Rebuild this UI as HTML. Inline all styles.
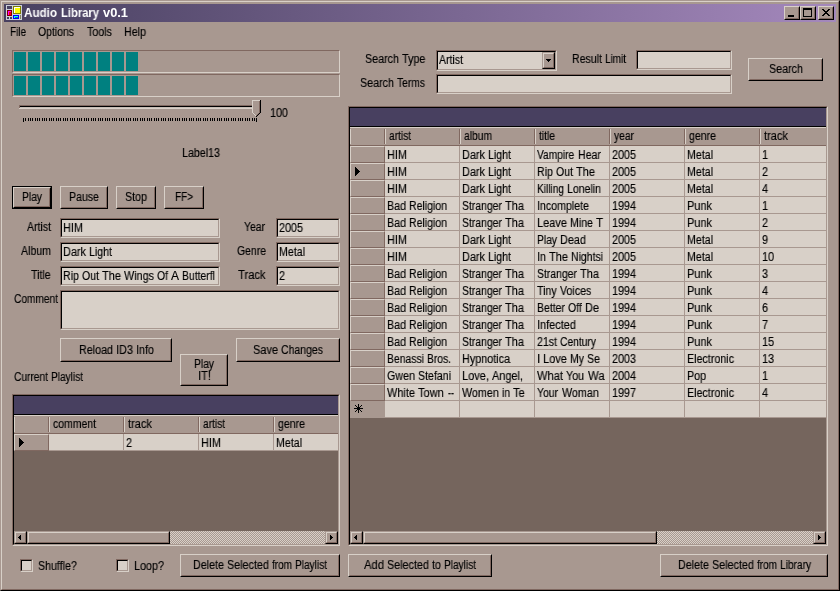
<!DOCTYPE html>
<html><head><meta charset="utf-8"><title>Audio Library v0.1</title>
<style>
html,body{margin:0;padding:0;}
body{width:840px;height:591px;overflow:hidden;background:#a89890;position:relative;font-family:"Liberation Sans",sans-serif;font-size:12px;color:#000;line-height:13px;}
.w{display:inline-block;white-space:nowrap;}
.s{display:inline-block;transform-origin:0 50%;will-change:transform;-webkit-text-stroke-width:0.15px;}
.tt .s{-webkit-text-stroke-width:0;}
div,span,i{box-sizing:border-box;}
body>div,.grid>div,.pb>i{position:absolute;}
.t{white-space:nowrap;}
.win{left:0;top:0;width:840px;height:591px;border:1px solid;border-color:#a89890 #000 #000 #a89890;}
.win2{left:1px;top:1px;width:838px;height:589px;border:1px solid;border-color:#d8d0c8 #806860 #806860 #d8d0c8;}
.title{left:4px;top:4px;width:832px;height:18px;background:linear-gradient(90deg,#484060 0%,#a488bc 100%);}
.tt{color:#fff;font-weight:bold;white-space:nowrap;}
.btn{background:#a89890;border:1px solid;border-color:#d8d0c8 #000 #000 #d8d0c8;}
.btn:before{content:"";position:absolute;left:0;top:0;right:0;bottom:0;border:1px solid;border-color:#a89890 #806860 #806860 #a89890;}
.btn.def{border-color:#000;}
.btn.def:before{border-color:#d8d0c8 #000 #000 #d8d0c8;}
.btn.def:after{content:"";position:absolute;left:1px;top:1px;right:1px;bottom:1px;border:1px solid;border-color:#a89890 #806860 #806860 #a89890;}
.bi{position:absolute;left:0;right:0;height:13px;text-align:center;white-space:nowrap;}
.bi.ml{height:26px;}
.bl{height:12px;line-height:12px;}
.tb{background:#d8d0c8;border:1px solid;border-color:#806860 #d8d0c8 #d8d0c8 #806860;}
.tb:before{content:"";position:absolute;left:0;top:0;right:0;bottom:0;border:1px solid;border-color:#000 #a89890 #a89890 #000;pointer-events:none;z-index:5;}
.tv{position:absolute;left:2px;top:3px;right:2px;white-space:nowrap;overflow:hidden;height:13px;}
.pb{border:1px solid;border-color:#806860 #d8d0c8 #d8d0c8 #806860;}
.pb>i{top:1px;width:12px;bottom:1px;background:#008080;display:block;}
.go{border:1px solid;border-color:#806860 #d8d0c8 #d8d0c8 #806860;}
.grid{position:absolute;left:0;top:0;right:0;bottom:0;border:1px solid;border-color:#000 #a89890 #a89890 #000;background:#75655d;overflow:hidden;}
.grid>div{overflow:hidden;}
.cap{background:#484060;}
.hc{background:#a89890;border-top:1px solid #d8d0c8;border-bottom:1px solid #806860;}
.hc:before{content:"";position:absolute;left:0;top:1px;bottom:1px;width:1px;background:#d8d0c8;}
.hc:after{content:"";position:absolute;right:0;top:1px;bottom:1px;width:1px;background:#806860;}
.hc>span{position:absolute;left:4px;top:2px;white-space:nowrap;}
.rh{background:#a89890;border:1px solid;border-color:#d8d0c8 #806860 #806860 #d8d0c8;}
.rh.flat{border:0;}
.cell{background:#d8d0c8;border-right:1px solid #a89890;border-bottom:1px solid #a89890;}
.cell>span{position:absolute;left:2px;top:3px;white-space:nowrap;}
.star{position:absolute;left:3px;top:1px;font-size:12px;font-family:"DejaVu Sans",sans-serif;}
.sbt{background-color:#a89890;background-image:linear-gradient(45deg,#d8d0c8 25%,transparent 25%,transparent 75%,#d8d0c8 75%),linear-gradient(45deg,#d8d0c8 25%,transparent 25%,transparent 75%,#d8d0c8 75%);background-size:2px 2px;background-position:0 0,1px 1px;}
.sbb{background:#a89890;border:1px solid;border-color:#a89890 #000 #000 #a89890;}
.sbb:before{content:"";position:absolute;left:0;top:0;right:0;bottom:0;border:1px solid;border-color:#d8d0c8 #806860 #806860 #d8d0c8;}
.cbtn{background:#a89890;border:1px solid;border-color:#d8d0c8 #000 #000 #d8d0c8;}
.cbtn:before{content:"";position:absolute;left:0;top:0;right:0;bottom:0;border:1px solid;border-color:#a89890 #806860 #806860 #a89890;}
</style></head><body>
<div class="win"></div><div class="win2"></div>
<div class="title"></div>
<div style="left:6px;top:5px;width:16px;height:16px;"><svg width="16" height="16" viewBox="0 0 16 16" shape-rendering="crispEdges" style="display:block">
<rect x="0" y="0" width="16" height="15" fill="#ccd0d8"/>
<rect x="1" y="1" width="5" height="3" fill="#484060"/>
<rect x="7" y="1" width="8" height="8" fill="#808000"/><rect x="8" y="2" width="6" height="6" fill="#ffff00"/><rect x="8" y="2" width="6" height="1" fill="#fff"/><rect x="8" y="2" width="1" height="6" fill="#fff"/>
<rect x="1" y="5" width="5" height="6" fill="#800000"/><rect x="2" y="6" width="3" height="4" fill="#ff0000"/><rect x="2" y="6" width="3" height="1" fill="#ff00ff"/><rect x="2" y="6" width="1" height="4" fill="#ff00ff"/>
<rect x="7" y="10" width="6" height="4" fill="#0000ff"/><rect x="8" y="11" width="4" height="2" fill="#008080"/><rect x="8" y="11" width="4" height="1" fill="#00ffff"/><rect x="8" y="11" width="1" height="2" fill="#00ffff"/>
<rect x="14" y="10" width="1" height="4" fill="#808060"/>
<rect x="1" y="12" width="2" height="2" fill="#484060"/><rect x="4" y="12" width="2" height="2" fill="#484060"/>
</svg></div>
<div class="tt" style="left:24px;top:7px;"><span style="word-spacing:0.666px"><span class="w" style="width:33px"><span class="s" style="transform:scaleX(0.9709)">Audio</span></span> <span class="w" style="width:38px"><span class="s" style="transform:scaleX(0.9341)">Library</span></span> <span class="w" style="width:25px"><span class="s" style="transform:scaleX(1.0704)">v0.1</span></span></span></div>
<div class="cbtn" style="left:784px;top:6px;width:16px;height:14px;"><svg width="12" height="10" viewBox="0 1 12 10" shape-rendering="crispEdges" style="position:absolute;left:0px;top:0px"><rect x="3" y="9" width="6" height="2"/></svg></div>
<div class="cbtn" style="left:800px;top:6px;width:16px;height:14px;"><svg width="12" height="10" viewBox="0 1 12 10" shape-rendering="crispEdges" style="position:absolute;left:0px;top:0px"><rect x="2" y="2" width="9" height="2"/><rect x="2" y="2" width="1" height="9"/><rect x="10" y="2" width="1" height="9"/><rect x="2" y="10" width="9" height="1"/></svg></div>
<div class="cbtn" style="left:818px;top:6px;width:16px;height:14px;"><svg width="12" height="10" viewBox="0 1 12 10" shape-rendering="crispEdges" style="position:absolute;left:0px;top:0px"><path d="M3 3h2v1h1v1h2v-1h1v-1h2v1h-1v1h-1v1h-1v1h1v1h1v1h1v1h-2v-1h-1v-1h-2v1h-1v1h-2v-1h1v-1h1v-1h1v-1h-1v-1h-1v-1h-1z"/></svg></div>
<div class="t" style="left:10px;top:26px;"><span style="word-spacing:-0.334px"><span class="w" style="width:16px"><span class="s" style="transform:scaleX(0.8275)">File</span></span></span></div>
<div class="t" style="left:38px;top:26px;"><span style="word-spacing:-0.334px"><span class="w" style="width:36px"><span class="s" style="transform:scaleX(0.8705)">Options</span></span></span></div>
<div class="t" style="left:87px;top:26px;"><span style="word-spacing:-0.334px"><span class="w" style="width:26px"><span class="s" style="transform:scaleX(0.8860)">Tools</span></span></span></div>
<div class="t" style="left:124px;top:26px;"><span style="word-spacing:-0.334px"><span class="w" style="width:22px"><span class="s" style="transform:scaleX(0.8914)">Help</span></span></span></div>
<div class="pb" style="left:12px;top:50px;width:328px;height:23px;"><i style="left:1px"></i><i style="left:15px"></i><i style="left:29px"></i><i style="left:43px"></i><i style="left:57px"></i><i style="left:71px"></i><i style="left:85px"></i><i style="left:99px"></i><i style="left:113px"></i></div>
<div class="pb" style="left:12px;top:74px;width:328px;height:23px;"><i style="left:1px"></i><i style="left:15px"></i><i style="left:29px"></i><i style="left:43px"></i><i style="left:57px"></i><i style="left:71px"></i><i style="left:85px"></i><i style="left:99px"></i><i style="left:113px"></i></div>
<div style="left:19px;top:105px;width:242px;height:4px;"><svg width="242" height="4" shape-rendering="crispEdges" style="display:block"><rect x="0" y="0" width="242" height="1" fill="#806860"/><rect x="0" y="1" width="1" height="2" fill="#806860"/><rect x="1" y="1" width="240" height="1" fill="#000"/><rect x="1" y="2" width="241" height="1" fill="#c8beb6"/><rect x="0" y="3" width="242" height="1" fill="#d8d0c8"/><rect x="241" y="0" width="1" height="4" fill="#d8d0c8"/></svg></div>
<div style="left:23px;top:118px;width:236px;height:4px;"><svg width="236" height="4" shape-rendering="crispEdges" style="display:block"><rect x="0" y="0" width="1" height="4"/><rect x="2" y="0" width="1" height="3"/><rect x="5" y="0" width="1" height="3"/><rect x="7" y="0" width="1" height="3"/><rect x="9" y="0" width="1" height="3"/><rect x="12" y="0" width="1" height="3"/><rect x="14" y="0" width="1" height="3"/><rect x="16" y="0" width="1" height="3"/><rect x="19" y="0" width="1" height="3"/><rect x="21" y="0" width="1" height="3"/><rect x="23" y="0" width="1" height="3"/><rect x="26" y="0" width="1" height="3"/><rect x="28" y="0" width="1" height="3"/><rect x="30" y="0" width="1" height="3"/><rect x="33" y="0" width="1" height="3"/><rect x="35" y="0" width="1" height="3"/><rect x="37" y="0" width="1" height="3"/><rect x="40" y="0" width="1" height="3"/><rect x="42" y="0" width="1" height="3"/><rect x="44" y="0" width="1" height="3"/><rect x="47" y="0" width="1" height="3"/><rect x="49" y="0" width="1" height="3"/><rect x="51" y="0" width="1" height="3"/><rect x="54" y="0" width="1" height="3"/><rect x="56" y="0" width="1" height="3"/><rect x="58" y="0" width="1" height="3"/><rect x="61" y="0" width="1" height="3"/><rect x="63" y="0" width="1" height="3"/><rect x="65" y="0" width="1" height="3"/><rect x="68" y="0" width="1" height="3"/><rect x="70" y="0" width="1" height="3"/><rect x="72" y="0" width="1" height="3"/><rect x="75" y="0" width="1" height="3"/><rect x="77" y="0" width="1" height="3"/><rect x="79" y="0" width="1" height="3"/><rect x="82" y="0" width="1" height="3"/><rect x="84" y="0" width="1" height="3"/><rect x="86" y="0" width="1" height="3"/><rect x="89" y="0" width="1" height="3"/><rect x="91" y="0" width="1" height="3"/><rect x="93" y="0" width="1" height="3"/><rect x="96" y="0" width="1" height="3"/><rect x="98" y="0" width="1" height="3"/><rect x="100" y="0" width="1" height="3"/><rect x="103" y="0" width="1" height="3"/><rect x="105" y="0" width="1" height="3"/><rect x="107" y="0" width="1" height="3"/><rect x="110" y="0" width="1" height="3"/><rect x="112" y="0" width="1" height="3"/><rect x="114" y="0" width="1" height="3"/><rect x="117" y="0" width="1" height="3"/><rect x="119" y="0" width="1" height="3"/><rect x="121" y="0" width="1" height="3"/><rect x="124" y="0" width="1" height="3"/><rect x="126" y="0" width="1" height="3"/><rect x="128" y="0" width="1" height="3"/><rect x="131" y="0" width="1" height="3"/><rect x="133" y="0" width="1" height="3"/><rect x="135" y="0" width="1" height="3"/><rect x="138" y="0" width="1" height="3"/><rect x="140" y="0" width="1" height="3"/><rect x="142" y="0" width="1" height="3"/><rect x="145" y="0" width="1" height="3"/><rect x="147" y="0" width="1" height="3"/><rect x="149" y="0" width="1" height="3"/><rect x="152" y="0" width="1" height="3"/><rect x="154" y="0" width="1" height="3"/><rect x="156" y="0" width="1" height="3"/><rect x="159" y="0" width="1" height="3"/><rect x="161" y="0" width="1" height="3"/><rect x="163" y="0" width="1" height="3"/><rect x="166" y="0" width="1" height="3"/><rect x="168" y="0" width="1" height="3"/><rect x="170" y="0" width="1" height="3"/><rect x="173" y="0" width="1" height="3"/><rect x="175" y="0" width="1" height="3"/><rect x="177" y="0" width="1" height="3"/><rect x="180" y="0" width="1" height="3"/><rect x="182" y="0" width="1" height="3"/><rect x="184" y="0" width="1" height="3"/><rect x="187" y="0" width="1" height="3"/><rect x="189" y="0" width="1" height="3"/><rect x="191" y="0" width="1" height="3"/><rect x="194" y="0" width="1" height="3"/><rect x="196" y="0" width="1" height="3"/><rect x="198" y="0" width="1" height="3"/><rect x="201" y="0" width="1" height="3"/><rect x="203" y="0" width="1" height="3"/><rect x="205" y="0" width="1" height="3"/><rect x="208" y="0" width="1" height="3"/><rect x="210" y="0" width="1" height="3"/><rect x="212" y="0" width="1" height="3"/><rect x="215" y="0" width="1" height="3"/><rect x="217" y="0" width="1" height="3"/><rect x="219" y="0" width="1" height="3"/><rect x="222" y="0" width="1" height="3"/><rect x="224" y="0" width="1" height="3"/><rect x="226" y="0" width="1" height="3"/><rect x="229" y="0" width="1" height="3"/><rect x="231" y="0" width="1" height="3"/><rect x="233" y="0" width="1" height="4"/></svg></div>
<div style="left:252px;top:100px;width:9px;height:17px;"><svg width="9" height="17" viewBox="0 0 9 17" shape-rendering="crispEdges" style="display:block">
<path d="M0 0H9V13L4.5 17.5L0 13Z" fill="#a89890"/>
<rect x="0" y="0" width="8" height="1" fill="#d8d0c8"/><rect x="0" y="0" width="1" height="13" fill="#d8d0c8"/>
<rect x="7" y="1" width="1" height="12" fill="#806860"/><rect x="8" y="0" width="1" height="13" fill="#000"/>
<rect x="1" y="13" width="1" height="1" fill="#d8d0c8"/><rect x="2" y="14" width="1" height="1" fill="#d8d0c8"/><rect x="3" y="15" width="1" height="1" fill="#d8d0c8"/>
<rect x="7" y="13" width="1" height="1" fill="#000"/><rect x="6" y="14" width="1" height="1" fill="#000"/><rect x="5" y="15" width="1" height="1" fill="#000"/><rect x="4" y="16" width="1" height="1" fill="#000"/>
<rect x="6" y="13" width="1" height="1" fill="#806860"/><rect x="5" y="14" width="1" height="1" fill="#806860"/><rect x="4" y="15" width="1" height="1" fill="#806860"/>
<rect x="2" y="13" width="4" height="1" fill="#a89890"/><rect x="3" y="14" width="2" height="1" fill="#a89890"/>
</svg></div>
<div class="t" style="left:270px;top:107px;"><span style="word-spacing:-0.334px"><span class="w" style="width:18px"><span class="s" style="transform:scaleX(0.8990)">100</span></span></span></div>
<div class="t" style="left:182px;top:147px;"><span style="word-spacing:-0.334px"><span class="w" style="width:38px"><span class="s" style="transform:scaleX(0.8897)">Label13</span></span></span></div>
<div class="btn def" style="left:12px;top:186px;width:40px;height:23px;"><div class="bi" style="top:4px"><span style="word-spacing:-0.334px"><span class="w" style="width:20px"><span class="s" style="transform:scaleX(0.8568)">Play</span></span></span></div></div>
<div class="btn" style="left:60px;top:186px;width:48px;height:23px;"><div class="bi" style="top:4px"><span style="word-spacing:-0.334px"><span class="w" style="width:30px"><span class="s" style="transform:scaleX(0.8817)">Pause</span></span></span></div></div>
<div class="btn" style="left:116px;top:186px;width:40px;height:23px;"><div class="bi" style="top:4px"><span style="word-spacing:-0.334px"><span class="w" style="width:22px"><span class="s" style="transform:scaleX(0.8912)">Stop</span></span></span></div></div>
<div class="btn" style="left:164px;top:186px;width:40px;height:23px;"><div class="bi" style="top:4px"><span style="word-spacing:-0.334px"><span class="w" style="width:18px"><span class="s" style="transform:scaleX(0.8307)">FF&gt;</span></span></span></div></div>
<div class="t" style="left:27px;top:221px;"><span style="word-spacing:-0.334px"><span class="w" style="width:24px"><span class="s" style="transform:scaleX(0.8780)">Artist</span></span></span></div>
<div class="tb" style="left:60px;top:218px;width:160px;height:20px;"><div class="tv"><span style="word-spacing:-0.334px"><span class="w" style="width:20px"><span class="s" style="transform:scaleX(0.9093)">HIM</span></span></span></div></div>
<div class="t" style="left:21px;top:245px;"><span style="word-spacing:-0.334px"><span class="w" style="width:30px"><span class="s" style="transform:scaleX(0.8820)">Album</span></span></span></div>
<div class="tb" style="left:60px;top:242px;width:160px;height:20px;"><div class="tv"><span style="word-spacing:-0.334px"><span class="w" style="width:23px"><span class="s" style="transform:scaleX(0.9078)">Dark</span></span> <span class="w" style="width:23px"><span class="s" style="transform:scaleX(0.8839)">Light</span></span></span></div></div>
<div class="t" style="left:31px;top:269px;"><span style="word-spacing:-0.334px"><span class="w" style="width:20px"><span class="s" style="transform:scaleX(0.8822)">Title</span></span></span></div>
<div class="tb" style="left:60px;top:266px;width:160px;height:20px;"><div class="tv"><span style="word-spacing:-0.334px"><span class="w" style="width:16px"><span class="s" style="transform:scaleX(0.8886)">Rip</span></span> <span class="w" style="width:17px"><span class="s" style="transform:scaleX(0.8789)">Out</span></span> <span class="w" style="width:19px"><span class="s" style="transform:scaleX(0.9189)">The</span></span> <span class="w" style="width:30px"><span class="s" style="transform:scaleX(0.8998)">Wings</span></span> <span class="w" style="width:11px"><span class="s" style="transform:scaleX(0.8683)">Of</span></span> <span class="w" style="width:8px"><span class="s" style="transform:scaleX(0.9995)">A</span></span> <span class="w" style="width:33px"><span class="s" style="transform:scaleX(0.8681)">Butterfl</span></span></span></div></div>
<div class="t" style="left:244px;top:221px;"><span style="word-spacing:-0.334px"><span class="w" style="width:22px"><span class="s" style="transform:scaleX(0.8679)">Year</span></span></span></div>
<div class="tb" style="left:276px;top:218px;width:64px;height:20px;"><div class="tv"><span style="word-spacing:-0.334px"><span class="w" style="width:24px"><span class="s" style="transform:scaleX(0.8990)">2005</span></span></span></div></div>
<div class="t" style="left:237px;top:245px;"><span style="word-spacing:-0.334px"><span class="w" style="width:29px"><span class="s" style="transform:scaleX(0.8695)">Genre</span></span></span></div>
<div class="tb" style="left:276px;top:242px;width:64px;height:20px;"><div class="tv"><span style="word-spacing:-0.334px"><span class="w" style="width:26px"><span class="s" style="transform:scaleX(0.8860)">Metal</span></span></span></div></div>
<div class="t" style="left:238px;top:269px;"><span style="word-spacing:-0.334px"><span class="w" style="width:28px"><span class="s" style="transform:scaleX(0.9333)">Track</span></span></span></div>
<div class="tb" style="left:276px;top:266px;width:64px;height:20px;"><div class="tv"><span style="word-spacing:-0.334px"><span class="w" style="width:6px"><span class="s" style="transform:scaleX(0.8990)">2</span></span></span></div></div>
<div class="t" style="left:14px;top:293px;"><span style="word-spacing:-0.334px"><span class="w" style="width:44px"><span class="s" style="transform:scaleX(0.8459)">Comment</span></span></span></div>
<div class="tb" style="left:60px;top:290px;width:280px;height:40px;"><div class="tv"></div></div>
<div class="btn" style="left:60px;top:338px;width:112px;height:24px;"><div class="bi" style="top:5px"><span style="word-spacing:-0.334px"><span class="w" style="width:34px"><span class="s" style="transform:scaleX(0.8941)">Reload</span></span> <span class="w" style="width:17px"><span class="s" style="transform:scaleX(0.9104)">ID3</span></span> <span class="w" style="width:18px"><span class="s" style="transform:scaleX(0.8993)">Info</span></span></span></div></div>
<div class="btn" style="left:236px;top:338px;width:104px;height:24px;"><div class="bi" style="top:5px"><span style="word-spacing:-0.334px"><span class="w" style="width:25px"><span class="s" style="transform:scaleX(0.9140)">Save</span></span> <span class="w" style="width:42px"><span class="s" style="transform:scaleX(0.8744)">Changes</span></span></span></div></div>
<div class="btn" style="left:180px;top:354px;width:48px;height:32px;"><div class="bi ml" style="top:3px"><div class="bl"><span style="word-spacing:-0.334px"><span class="w" style="width:20px"><span class="s" style="transform:scaleX(0.8568)">Play</span></span></span></div><div class="bl"><span style="word-spacing:-0.334px"><span class="w" style="width:13px"><span class="s" style="transform:scaleX(0.9287)">IT!</span></span></span></div></div></div>
<div class="t" style="left:14px;top:371px;"><span style="word-spacing:-0.334px"><span class="w" style="width:34px"><span class="s" style="transform:scaleX(0.8497)">Current</span></span> <span class="w" style="width:32px"><span class="s" style="transform:scaleX(0.8419)">Playlist</span></span></span></div>
<div class="go" style="left:12px;top:394px;width:328px;height:152px;"><div class="grid">
<div class="cap" style="left:0;top:0;width:324px;height:18px;"></div>
<div style="left:0;top:18px;width:324px;height:1px;background:#000"></div>
<div class="hc" style="left:0;top:19px;width:35px;height:19px;"></div>
<div class="hc col" style="left:35px;top:19px;width:75px;height:19px;"><span><span style="word-spacing:-0.334px"><span class="w" style="width:43px"><span class="s" style="transform:scaleX(0.8714)">comment</span></span></span></span></div>
<div class="hc col" style="left:110px;top:19px;width:75px;height:19px;"><span><span style="word-spacing:-0.334px"><span class="w" style="width:24px"><span class="s" style="transform:scaleX(0.9229)">track</span></span></span></span></div>
<div class="hc col" style="left:185px;top:19px;width:75px;height:19px;"><span><span style="word-spacing:-0.334px"><span class="w" style="width:22px"><span class="s" style="transform:scaleX(0.8460)">artist</span></span></span></span></div>
<div class="hc col" style="left:260px;top:19px;width:75px;height:19px;"><span><span style="word-spacing:-0.334px"><span class="w" style="width:27px"><span class="s" style="transform:scaleX(0.8797)">genre</span></span></span></span></div>
<div class="rh" style="left:0;top:38px;width:35px;height:17px;"><svg width="5" height="9" viewBox="0 0 5 9" shape-rendering="crispEdges" style="position:absolute;left:4px;top:3px"><path d="M0 0V9L5 4.5Z" fill="#000"/><rect x="0" y="0" width="1" height="9"/><rect x="1" y="1" width="1" height="7"/><rect x="2" y="2" width="1" height="5"/><rect x="3" y="3" width="1" height="3"/><rect x="4" y="4" width="1" height="1"/></svg></div>
<div class="cell" style="left:35px;top:38px;width:75px;height:17px;"><span></span></div>
<div class="cell" style="left:110px;top:38px;width:75px;height:17px;"><span><span style="word-spacing:-0.334px"><span class="w" style="width:6px"><span class="s" style="transform:scaleX(0.8990)">2</span></span></span></span></div>
<div class="cell" style="left:185px;top:38px;width:75px;height:17px;"><span><span style="word-spacing:-0.334px"><span class="w" style="width:20px"><span class="s" style="transform:scaleX(0.9093)">HIM</span></span></span></span></div>
<div class="cell" style="left:260px;top:38px;width:75px;height:17px;"><span><span style="word-spacing:-0.334px"><span class="w" style="width:26px"><span class="s" style="transform:scaleX(0.8860)">Metal</span></span></span></span></div>
<div class="sbt" style="left:0;top:135px;width:324px;height:13px;"></div>
<div class="sbb" style="left:0;top:135px;width:13px;height:13px;"><svg width="3" height="5" viewBox="0 0 3 5" shape-rendering="crispEdges" style="position:absolute;left:3px;top:3px"><rect x="2" y="0" width="1" height="5"/><rect x="1" y="1" width="1" height="3"/><rect x="0" y="2" width="1" height="1"/></svg></div>
<div class="sbb" style="left:311px;top:135px;width:13px;height:13px;"><svg width="3" height="5" viewBox="0 0 3 5" shape-rendering="crispEdges" style="position:absolute;left:4px;top:3px"><rect x="0" y="0" width="1" height="5"/><rect x="1" y="1" width="1" height="3"/><rect x="2" y="2" width="1" height="1"/></svg></div>
<div class="sbb" style="left:13px;top:135px;width:143px;height:13px;"></div>
</div></div>
<div class="tb cb" style="left:20px;top:559px;width:13px;height:13px;"></div>
<div class="t" style="left:38px;top:560px;"><span style="word-spacing:-0.334px"><span class="w" style="width:39px"><span class="s" style="transform:scaleX(0.8857)">Shuffle?</span></span></span></div>
<div class="tb cb" style="left:116px;top:559px;width:13px;height:13px;"></div>
<div class="t" style="left:134px;top:560px;"><span style="word-spacing:-0.334px"><span class="w" style="width:30px"><span class="s" style="transform:scaleX(0.8990)">Loop?</span></span></span></div>
<div class="btn" style="left:180px;top:554px;width:160px;height:23px;"><div class="bi" style="top:4px"><span style="word-spacing:-0.334px"><span class="w" style="width:31px"><span class="s" style="transform:scaleX(0.8937)">Delete</span></span> <span class="w" style="width:42px"><span class="s" style="transform:scaleX(0.8994)">Selected</span></span> <span class="w" style="width:20px"><span class="s" style="transform:scaleX(0.8333)">from</span></span> <span class="w" style="width:32px"><span class="s" style="transform:scaleX(0.8419)">Playlist</span></span></span></div></div>
<div class="t" style="left:365px;top:53px;"><span style="word-spacing:-0.334px"><span class="w" style="width:34px"><span class="s" style="transform:scaleX(0.8942)">Search</span></span> <span class="w" style="width:24px"><span class="s" style="transform:scaleX(0.8996)">Type</span></span></span></div>
<div class="t" style="left:360px;top:77px;"><span style="word-spacing:-0.334px"><span class="w" style="width:34px"><span class="s" style="transform:scaleX(0.8942)">Search</span></span> <span class="w" style="width:29px"><span class="s" style="transform:scaleX(0.8530)">Terms</span></span></span></div>
<div class="tb" style="left:436px;top:50px;width:121px;height:21px;"><div class="tv"><span style="word-spacing:-0.334px"><span class="w" style="width:24px"><span class="s" style="transform:scaleX(0.8780)">Artist</span></span></span></div><div class="sbb" style="position:absolute;right:1px;top:1px;width:13px;height:17px;"><svg width="5" height="3" viewBox="0 0 5 3" shape-rendering="crispEdges" style="position:absolute;left:3px;top:6px"><rect x="0" y="0" width="5" height="1"/><rect x="1" y="1" width="3" height="1"/><rect x="2" y="2" width="1" height="1"/></svg></div></div>
<div class="tb" style="left:436px;top:74px;width:296px;height:20px;"><div class="tv"></div></div>
<div class="t" style="left:572px;top:53px;"><span style="word-spacing:-0.334px"><span class="w" style="width:30px"><span class="s" style="transform:scaleX(0.8820)">Result</span></span> <span class="w" style="width:21px"><span class="s" style="transform:scaleX(0.8289)">Limit</span></span></span></div>
<div class="tb" style="left:636px;top:50px;width:96px;height:20px;"><div class="tv"></div></div>
<div class="btn" style="left:748px;top:58px;width:75px;height:23px;"><div class="bi" style="top:4px"><span style="word-spacing:-0.334px"><span class="w" style="width:34px"><span class="s" style="transform:scaleX(0.8942)">Search</span></span></span></div></div>
<div class="go" style="left:348px;top:106px;width:480px;height:440px;"><div class="grid">
<div class="cap" style="left:0;top:0;width:476px;height:18px;"></div>
<div style="left:0;top:18px;width:476px;height:1px;background:#000"></div>
<div class="hc" style="left:0;top:19px;width:35px;height:19px;"></div>
<div class="hc col" style="left:35px;top:19px;width:75px;height:19px;"><span><span style="word-spacing:-0.334px"><span class="w" style="width:22px"><span class="s" style="transform:scaleX(0.8460)">artist</span></span></span></span></div>
<div class="hc col" style="left:110px;top:19px;width:75px;height:19px;"><span><span style="word-spacing:-0.334px"><span class="w" style="width:28px"><span class="s" style="transform:scaleX(0.8567)">album</span></span></span></span></div>
<div class="hc col" style="left:185px;top:19px;width:75px;height:19px;"><span><span style="word-spacing:-0.334px"><span class="w" style="width:16px"><span class="s" style="transform:scaleX(0.8568)">title</span></span></span></span></div>
<div class="hc col" style="left:260px;top:19px;width:75px;height:19px;"><span><span style="word-spacing:-0.334px"><span class="w" style="width:20px"><span class="s" style="transform:scaleX(0.8568)">year</span></span></span></span></div>
<div class="hc col" style="left:335px;top:19px;width:75px;height:19px;"><span><span style="word-spacing:-0.334px"><span class="w" style="width:27px"><span class="s" style="transform:scaleX(0.8797)">genre</span></span></span></span></div>
<div class="hc col" style="left:410px;top:19px;width:75px;height:19px;"><span><span style="word-spacing:-0.334px"><span class="w" style="width:24px"><span class="s" style="transform:scaleX(0.9229)">track</span></span></span></span></div>
<div class="rh" style="left:0;top:38px;width:35px;height:17px;"></div>
<div class="cell" style="left:35px;top:38px;width:75px;height:17px;"><span><span style="word-spacing:-0.334px"><span class="w" style="width:20px"><span class="s" style="transform:scaleX(0.9093)">HIM</span></span></span></span></div>
<div class="cell" style="left:110px;top:38px;width:75px;height:17px;"><span><span style="word-spacing:-0.334px"><span class="w" style="width:23px"><span class="s" style="transform:scaleX(0.9078)">Dark</span></span> <span class="w" style="width:23px"><span class="s" style="transform:scaleX(0.8839)">Light</span></span></span></span></div>
<div class="cell" style="left:185px;top:38px;width:75px;height:17px;"><span><span style="word-spacing:-0.334px"><span class="w" style="width:38px"><span class="s" style="transform:scaleX(0.8504)">Vampire</span></span> <span class="w" style="width:23px"><span class="s" style="transform:scaleX(0.8843)">Hear</span></span></span></span></div>
<div class="cell" style="left:260px;top:38px;width:75px;height:17px;"><span><span style="word-spacing:-0.334px"><span class="w" style="width:24px"><span class="s" style="transform:scaleX(0.8990)">2005</span></span></span></span></div>
<div class="cell" style="left:335px;top:38px;width:75px;height:17px;"><span><span style="word-spacing:-0.334px"><span class="w" style="width:26px"><span class="s" style="transform:scaleX(0.8860)">Metal</span></span></span></span></div>
<div class="cell" style="left:410px;top:38px;width:75px;height:17px;"><span><span style="word-spacing:-0.334px"><span class="w" style="width:6px"><span class="s" style="transform:scaleX(0.8990)">1</span></span></span></span></div>
<div class="rh" style="left:0;top:55px;width:35px;height:17px;"><svg width="5" height="9" viewBox="0 0 5 9" shape-rendering="crispEdges" style="position:absolute;left:4px;top:3px"><path d="M0 0V9L5 4.5Z" fill="#000"/><rect x="0" y="0" width="1" height="9"/><rect x="1" y="1" width="1" height="7"/><rect x="2" y="2" width="1" height="5"/><rect x="3" y="3" width="1" height="3"/><rect x="4" y="4" width="1" height="1"/></svg></div>
<div class="cell" style="left:35px;top:55px;width:75px;height:17px;"><span><span style="word-spacing:-0.334px"><span class="w" style="width:20px"><span class="s" style="transform:scaleX(0.9093)">HIM</span></span></span></span></div>
<div class="cell" style="left:110px;top:55px;width:75px;height:17px;"><span><span style="word-spacing:-0.334px"><span class="w" style="width:23px"><span class="s" style="transform:scaleX(0.9078)">Dark</span></span> <span class="w" style="width:23px"><span class="s" style="transform:scaleX(0.8839)">Light</span></span></span></span></div>
<div class="cell" style="left:185px;top:55px;width:75px;height:17px;"><span><span style="word-spacing:-0.334px"><span class="w" style="width:16px"><span class="s" style="transform:scaleX(0.8886)">Rip</span></span> <span class="w" style="width:17px"><span class="s" style="transform:scaleX(0.8789)">Out</span></span> <span class="w" style="width:19px"><span class="s" style="transform:scaleX(0.9189)">The</span></span> </span></span></div>
<div class="cell" style="left:260px;top:55px;width:75px;height:17px;"><span><span style="word-spacing:-0.334px"><span class="w" style="width:24px"><span class="s" style="transform:scaleX(0.8990)">2005</span></span></span></span></div>
<div class="cell" style="left:335px;top:55px;width:75px;height:17px;"><span><span style="word-spacing:-0.334px"><span class="w" style="width:26px"><span class="s" style="transform:scaleX(0.8860)">Metal</span></span></span></span></div>
<div class="cell" style="left:410px;top:55px;width:75px;height:17px;"><span><span style="word-spacing:-0.334px"><span class="w" style="width:6px"><span class="s" style="transform:scaleX(0.8990)">2</span></span></span></span></div>
<div class="rh" style="left:0;top:72px;width:35px;height:17px;"></div>
<div class="cell" style="left:35px;top:72px;width:75px;height:17px;"><span><span style="word-spacing:-0.334px"><span class="w" style="width:20px"><span class="s" style="transform:scaleX(0.9093)">HIM</span></span></span></span></div>
<div class="cell" style="left:110px;top:72px;width:75px;height:17px;"><span><span style="word-spacing:-0.334px"><span class="w" style="width:23px"><span class="s" style="transform:scaleX(0.9078)">Dark</span></span> <span class="w" style="width:23px"><span class="s" style="transform:scaleX(0.8839)">Light</span></span></span></span></div>
<div class="cell" style="left:185px;top:72px;width:75px;height:17px;"><span><span style="word-spacing:-0.334px"><span class="w" style="width:27px"><span class="s" style="transform:scaleX(0.8433)">Killing</span></span> <span class="w" style="width:34px"><span class="s" style="transform:scaleX(0.8785)">Lonelin</span></span></span></span></div>
<div class="cell" style="left:260px;top:72px;width:75px;height:17px;"><span><span style="word-spacing:-0.334px"><span class="w" style="width:24px"><span class="s" style="transform:scaleX(0.8990)">2005</span></span></span></span></div>
<div class="cell" style="left:335px;top:72px;width:75px;height:17px;"><span><span style="word-spacing:-0.334px"><span class="w" style="width:26px"><span class="s" style="transform:scaleX(0.8860)">Metal</span></span></span></span></div>
<div class="cell" style="left:410px;top:72px;width:75px;height:17px;"><span><span style="word-spacing:-0.334px"><span class="w" style="width:6px"><span class="s" style="transform:scaleX(0.8990)">4</span></span></span></span></div>
<div class="rh" style="left:0;top:89px;width:35px;height:17px;"></div>
<div class="cell" style="left:35px;top:89px;width:75px;height:17px;"><span><span style="word-spacing:-0.334px"><span class="w" style="width:19px"><span class="s" style="transform:scaleX(0.8899)">Bad</span></span> <span class="w" style="width:38px"><span class="s" style="transform:scaleX(0.8764)">Religion</span></span></span></span></div>
<div class="cell" style="left:110px;top:89px;width:75px;height:17px;"><span><span style="word-spacing:-0.334px"><span class="w" style="width:40px"><span class="s" style="transform:scaleX(0.8691)">Stranger</span></span> <span class="w" style="width:19px"><span class="s" style="transform:scaleX(0.9189)">Tha</span></span></span></span></div>
<div class="cell" style="left:185px;top:89px;width:75px;height:17px;"><span><span style="word-spacing:-0.334px"><span class="w" style="width:52px"><span class="s" style="transform:scaleX(0.8859)">Incomplete</span></span></span></span></div>
<div class="cell" style="left:260px;top:89px;width:75px;height:17px;"><span><span style="word-spacing:-0.334px"><span class="w" style="width:24px"><span class="s" style="transform:scaleX(0.8990)">1994</span></span></span></span></div>
<div class="cell" style="left:335px;top:89px;width:75px;height:17px;"><span><span style="word-spacing:-0.334px"><span class="w" style="width:25px"><span class="s" style="transform:scaleX(0.9140)">Punk</span></span></span></span></div>
<div class="cell" style="left:410px;top:89px;width:75px;height:17px;"><span><span style="word-spacing:-0.334px"><span class="w" style="width:6px"><span class="s" style="transform:scaleX(0.8990)">1</span></span></span></span></div>
<div class="rh" style="left:0;top:106px;width:35px;height:17px;"></div>
<div class="cell" style="left:35px;top:106px;width:75px;height:17px;"><span><span style="word-spacing:-0.334px"><span class="w" style="width:19px"><span class="s" style="transform:scaleX(0.8899)">Bad</span></span> <span class="w" style="width:38px"><span class="s" style="transform:scaleX(0.8764)">Religion</span></span></span></span></div>
<div class="cell" style="left:110px;top:106px;width:75px;height:17px;"><span><span style="word-spacing:-0.334px"><span class="w" style="width:40px"><span class="s" style="transform:scaleX(0.8691)">Stranger</span></span> <span class="w" style="width:19px"><span class="s" style="transform:scaleX(0.9189)">Tha</span></span></span></span></div>
<div class="cell" style="left:185px;top:106px;width:75px;height:17px;"><span><span style="word-spacing:-0.334px"><span class="w" style="width:30px"><span class="s" style="transform:scaleX(0.9176)">Leave</span></span> <span class="w" style="width:23px"><span class="s" style="transform:scaleX(0.8843)">Mine</span></span> <span class="w" style="width:7px"><span class="s" style="transform:scaleX(0.9550)">T</span></span></span></span></div>
<div class="cell" style="left:260px;top:106px;width:75px;height:17px;"><span><span style="word-spacing:-0.334px"><span class="w" style="width:24px"><span class="s" style="transform:scaleX(0.8990)">1994</span></span></span></span></div>
<div class="cell" style="left:335px;top:106px;width:75px;height:17px;"><span><span style="word-spacing:-0.334px"><span class="w" style="width:25px"><span class="s" style="transform:scaleX(0.9140)">Punk</span></span></span></span></div>
<div class="cell" style="left:410px;top:106px;width:75px;height:17px;"><span><span style="word-spacing:-0.334px"><span class="w" style="width:6px"><span class="s" style="transform:scaleX(0.8990)">2</span></span></span></span></div>
<div class="rh" style="left:0;top:123px;width:35px;height:17px;"></div>
<div class="cell" style="left:35px;top:123px;width:75px;height:17px;"><span><span style="word-spacing:-0.334px"><span class="w" style="width:20px"><span class="s" style="transform:scaleX(0.9093)">HIM</span></span></span></span></div>
<div class="cell" style="left:110px;top:123px;width:75px;height:17px;"><span><span style="word-spacing:-0.334px"><span class="w" style="width:23px"><span class="s" style="transform:scaleX(0.9078)">Dark</span></span> <span class="w" style="width:23px"><span class="s" style="transform:scaleX(0.8839)">Light</span></span></span></span></div>
<div class="cell" style="left:185px;top:123px;width:75px;height:17px;"><span><span style="word-spacing:-0.334px"><span class="w" style="width:20px"><span class="s" style="transform:scaleX(0.8568)">Play</span></span> <span class="w" style="width:26px"><span class="s" style="transform:scaleX(0.9063)">Dead</span></span></span></span></div>
<div class="cell" style="left:260px;top:123px;width:75px;height:17px;"><span><span style="word-spacing:-0.334px"><span class="w" style="width:24px"><span class="s" style="transform:scaleX(0.8990)">2005</span></span></span></span></div>
<div class="cell" style="left:335px;top:123px;width:75px;height:17px;"><span><span style="word-spacing:-0.334px"><span class="w" style="width:26px"><span class="s" style="transform:scaleX(0.8860)">Metal</span></span></span></span></div>
<div class="cell" style="left:410px;top:123px;width:75px;height:17px;"><span><span style="word-spacing:-0.334px"><span class="w" style="width:6px"><span class="s" style="transform:scaleX(0.8990)">9</span></span></span></span></div>
<div class="rh" style="left:0;top:140px;width:35px;height:17px;"></div>
<div class="cell" style="left:35px;top:140px;width:75px;height:17px;"><span><span style="word-spacing:-0.334px"><span class="w" style="width:20px"><span class="s" style="transform:scaleX(0.9093)">HIM</span></span></span></span></div>
<div class="cell" style="left:110px;top:140px;width:75px;height:17px;"><span><span style="word-spacing:-0.334px"><span class="w" style="width:23px"><span class="s" style="transform:scaleX(0.9078)">Dark</span></span> <span class="w" style="width:23px"><span class="s" style="transform:scaleX(0.8839)">Light</span></span></span></span></div>
<div class="cell" style="left:185px;top:140px;width:75px;height:17px;"><span><span style="word-spacing:-0.334px"><span class="w" style="width:9px"><span class="s" style="transform:scaleX(0.8993)">In</span></span> <span class="w" style="width:19px"><span class="s" style="transform:scaleX(0.9189)">The</span></span> <span class="w" style="width:32px"><span class="s" style="transform:scaleX(0.8724)">Nightsi</span></span></span></span></div>
<div class="cell" style="left:260px;top:140px;width:75px;height:17px;"><span><span style="word-spacing:-0.334px"><span class="w" style="width:24px"><span class="s" style="transform:scaleX(0.8990)">2005</span></span></span></span></div>
<div class="cell" style="left:335px;top:140px;width:75px;height:17px;"><span><span style="word-spacing:-0.334px"><span class="w" style="width:26px"><span class="s" style="transform:scaleX(0.8860)">Metal</span></span></span></span></div>
<div class="cell" style="left:410px;top:140px;width:75px;height:17px;"><span><span style="word-spacing:-0.334px"><span class="w" style="width:12px"><span class="s" style="transform:scaleX(0.8990)">10</span></span></span></span></div>
<div class="rh" style="left:0;top:157px;width:35px;height:17px;"></div>
<div class="cell" style="left:35px;top:157px;width:75px;height:17px;"><span><span style="word-spacing:-0.334px"><span class="w" style="width:19px"><span class="s" style="transform:scaleX(0.8899)">Bad</span></span> <span class="w" style="width:38px"><span class="s" style="transform:scaleX(0.8764)">Religion</span></span></span></span></div>
<div class="cell" style="left:110px;top:157px;width:75px;height:17px;"><span><span style="word-spacing:-0.334px"><span class="w" style="width:40px"><span class="s" style="transform:scaleX(0.8691)">Stranger</span></span> <span class="w" style="width:19px"><span class="s" style="transform:scaleX(0.9189)">Tha</span></span></span></span></div>
<div class="cell" style="left:185px;top:157px;width:75px;height:17px;"><span><span style="word-spacing:-0.334px"><span class="w" style="width:40px"><span class="s" style="transform:scaleX(0.8691)">Stranger</span></span> <span class="w" style="width:19px"><span class="s" style="transform:scaleX(0.9189)">Tha</span></span></span></span></div>
<div class="cell" style="left:260px;top:157px;width:75px;height:17px;"><span><span style="word-spacing:-0.334px"><span class="w" style="width:24px"><span class="s" style="transform:scaleX(0.8990)">1994</span></span></span></span></div>
<div class="cell" style="left:335px;top:157px;width:75px;height:17px;"><span><span style="word-spacing:-0.334px"><span class="w" style="width:25px"><span class="s" style="transform:scaleX(0.9140)">Punk</span></span></span></span></div>
<div class="cell" style="left:410px;top:157px;width:75px;height:17px;"><span><span style="word-spacing:-0.334px"><span class="w" style="width:6px"><span class="s" style="transform:scaleX(0.8990)">3</span></span></span></span></div>
<div class="rh" style="left:0;top:174px;width:35px;height:17px;"></div>
<div class="cell" style="left:35px;top:174px;width:75px;height:17px;"><span><span style="word-spacing:-0.334px"><span class="w" style="width:19px"><span class="s" style="transform:scaleX(0.8899)">Bad</span></span> <span class="w" style="width:38px"><span class="s" style="transform:scaleX(0.8764)">Religion</span></span></span></span></div>
<div class="cell" style="left:110px;top:174px;width:75px;height:17px;"><span><span style="word-spacing:-0.334px"><span class="w" style="width:40px"><span class="s" style="transform:scaleX(0.8691)">Stranger</span></span> <span class="w" style="width:19px"><span class="s" style="transform:scaleX(0.9189)">Tha</span></span></span></span></div>
<div class="cell" style="left:185px;top:174px;width:75px;height:17px;"><span><span style="word-spacing:-0.334px"><span class="w" style="width:20px"><span class="s" style="transform:scaleX(0.8822)">Tiny</span></span> <span class="w" style="width:32px"><span class="s" style="transform:scaleX(0.8885)">Voices</span></span></span></span></div>
<div class="cell" style="left:260px;top:174px;width:75px;height:17px;"><span><span style="word-spacing:-0.334px"><span class="w" style="width:24px"><span class="s" style="transform:scaleX(0.8990)">1994</span></span></span></span></div>
<div class="cell" style="left:335px;top:174px;width:75px;height:17px;"><span><span style="word-spacing:-0.334px"><span class="w" style="width:25px"><span class="s" style="transform:scaleX(0.9140)">Punk</span></span></span></span></div>
<div class="cell" style="left:410px;top:174px;width:75px;height:17px;"><span><span style="word-spacing:-0.334px"><span class="w" style="width:6px"><span class="s" style="transform:scaleX(0.8990)">4</span></span></span></span></div>
<div class="rh" style="left:0;top:191px;width:35px;height:17px;"></div>
<div class="cell" style="left:35px;top:191px;width:75px;height:17px;"><span><span style="word-spacing:-0.334px"><span class="w" style="width:19px"><span class="s" style="transform:scaleX(0.8899)">Bad</span></span> <span class="w" style="width:38px"><span class="s" style="transform:scaleX(0.8764)">Religion</span></span></span></span></div>
<div class="cell" style="left:110px;top:191px;width:75px;height:17px;"><span><span style="word-spacing:-0.334px"><span class="w" style="width:40px"><span class="s" style="transform:scaleX(0.8691)">Stranger</span></span> <span class="w" style="width:19px"><span class="s" style="transform:scaleX(0.9189)">Tha</span></span></span></span></div>
<div class="cell" style="left:185px;top:191px;width:75px;height:17px;"><span><span style="word-spacing:-0.334px"><span class="w" style="width:28px"><span class="s" style="transform:scaleX(0.8746)">Better</span></span> <span class="w" style="width:14px"><span class="s" style="transform:scaleX(0.8749)">Off</span></span> <span class="w" style="width:14px"><span class="s" style="transform:scaleX(0.9127)">De</span></span></span></span></div>
<div class="cell" style="left:260px;top:191px;width:75px;height:17px;"><span><span style="word-spacing:-0.334px"><span class="w" style="width:24px"><span class="s" style="transform:scaleX(0.8990)">1994</span></span></span></span></div>
<div class="cell" style="left:335px;top:191px;width:75px;height:17px;"><span><span style="word-spacing:-0.334px"><span class="w" style="width:25px"><span class="s" style="transform:scaleX(0.9140)">Punk</span></span></span></span></div>
<div class="cell" style="left:410px;top:191px;width:75px;height:17px;"><span><span style="word-spacing:-0.334px"><span class="w" style="width:6px"><span class="s" style="transform:scaleX(0.8990)">6</span></span></span></span></div>
<div class="rh" style="left:0;top:208px;width:35px;height:17px;"></div>
<div class="cell" style="left:35px;top:208px;width:75px;height:17px;"><span><span style="word-spacing:-0.334px"><span class="w" style="width:19px"><span class="s" style="transform:scaleX(0.8899)">Bad</span></span> <span class="w" style="width:38px"><span class="s" style="transform:scaleX(0.8764)">Religion</span></span></span></span></div>
<div class="cell" style="left:110px;top:208px;width:75px;height:17px;"><span><span style="word-spacing:-0.334px"><span class="w" style="width:40px"><span class="s" style="transform:scaleX(0.8691)">Stranger</span></span> <span class="w" style="width:19px"><span class="s" style="transform:scaleX(0.9189)">Tha</span></span></span></span></div>
<div class="cell" style="left:185px;top:208px;width:75px;height:17px;"><span><span style="word-spacing:-0.334px"><span class="w" style="width:39px"><span class="s" style="transform:scaleX(0.9134)">Infected</span></span></span></span></div>
<div class="cell" style="left:260px;top:208px;width:75px;height:17px;"><span><span style="word-spacing:-0.334px"><span class="w" style="width:24px"><span class="s" style="transform:scaleX(0.8990)">1994</span></span></span></span></div>
<div class="cell" style="left:335px;top:208px;width:75px;height:17px;"><span><span style="word-spacing:-0.334px"><span class="w" style="width:25px"><span class="s" style="transform:scaleX(0.9140)">Punk</span></span></span></span></div>
<div class="cell" style="left:410px;top:208px;width:75px;height:17px;"><span><span style="word-spacing:-0.334px"><span class="w" style="width:6px"><span class="s" style="transform:scaleX(0.8990)">7</span></span></span></span></div>
<div class="rh" style="left:0;top:225px;width:35px;height:17px;"></div>
<div class="cell" style="left:35px;top:225px;width:75px;height:17px;"><span><span style="word-spacing:-0.334px"><span class="w" style="width:19px"><span class="s" style="transform:scaleX(0.8899)">Bad</span></span> <span class="w" style="width:38px"><span class="s" style="transform:scaleX(0.8764)">Religion</span></span></span></span></div>
<div class="cell" style="left:110px;top:225px;width:75px;height:17px;"><span><span style="word-spacing:-0.334px"><span class="w" style="width:40px"><span class="s" style="transform:scaleX(0.8691)">Stranger</span></span> <span class="w" style="width:19px"><span class="s" style="transform:scaleX(0.9189)">Tha</span></span></span></span></div>
<div class="cell" style="left:185px;top:225px;width:75px;height:17px;"><span><span style="word-spacing:-0.334px"><span class="w" style="width:20px"><span class="s" style="transform:scaleX(0.8818)">21st</span></span> <span class="w" style="width:36px"><span class="s" style="transform:scaleX(0.8568)">Century</span></span></span></span></div>
<div class="cell" style="left:260px;top:225px;width:75px;height:17px;"><span><span style="word-spacing:-0.334px"><span class="w" style="width:24px"><span class="s" style="transform:scaleX(0.8990)">1994</span></span></span></span></div>
<div class="cell" style="left:335px;top:225px;width:75px;height:17px;"><span><span style="word-spacing:-0.334px"><span class="w" style="width:25px"><span class="s" style="transform:scaleX(0.9140)">Punk</span></span></span></span></div>
<div class="cell" style="left:410px;top:225px;width:75px;height:17px;"><span><span style="word-spacing:-0.334px"><span class="w" style="width:12px"><span class="s" style="transform:scaleX(0.8990)">15</span></span></span></span></div>
<div class="rh" style="left:0;top:242px;width:35px;height:17px;"></div>
<div class="cell" style="left:35px;top:242px;width:75px;height:17px;"><span><span style="word-spacing:-0.334px"><span class="w" style="width:37px"><span class="s" style="transform:scaleX(0.8667)">Benassi</span></span> <span class="w" style="width:24px"><span class="s" style="transform:scaleX(0.8569)">Bros.</span></span></span></span></div>
<div class="cell" style="left:110px;top:242px;width:75px;height:17px;"><span><span style="word-spacing:-0.334px"><span class="w" style="width:48px"><span class="s" style="transform:scaleX(0.8995)">Hypnotica</span></span></span></span></div>
<div class="cell" style="left:185px;top:242px;width:75px;height:17px;"><span><span style="word-spacing:-0.334px"><span class="w" style="width:3px"><span class="s" style="transform:scaleX(0.8998)">I</span></span> <span class="w" style="width:24px"><span class="s" style="transform:scaleX(0.9223)">Love</span></span> <span class="w" style="width:14px"><span class="s" style="transform:scaleX(0.8752)">My</span></span> <span class="w" style="width:13px"><span class="s" style="transform:scaleX(0.8857)">Se</span></span></span></span></div>
<div class="cell" style="left:260px;top:242px;width:75px;height:17px;"><span><span style="word-spacing:-0.334px"><span class="w" style="width:24px"><span class="s" style="transform:scaleX(0.8990)">2003</span></span></span></span></div>
<div class="cell" style="left:335px;top:242px;width:75px;height:17px;"><span><span style="word-spacing:-0.334px"><span class="w" style="width:47px"><span class="s" style="transform:scaleX(0.8921)">Electronic</span></span></span></span></div>
<div class="cell" style="left:410px;top:242px;width:75px;height:17px;"><span><span style="word-spacing:-0.334px"><span class="w" style="width:12px"><span class="s" style="transform:scaleX(0.8990)">13</span></span></span></span></div>
<div class="rh" style="left:0;top:259px;width:35px;height:17px;"></div>
<div class="cell" style="left:35px;top:259px;width:75px;height:17px;"><span><span style="word-spacing:-0.334px"><span class="w" style="width:28px"><span class="s" style="transform:scaleX(0.8932)">Gwen</span></span> <span class="w" style="width:33px"><span class="s" style="transform:scaleX(0.8833)">Stefani</span></span></span></span></div>
<div class="cell" style="left:110px;top:259px;width:75px;height:17px;"><span><span style="word-spacing:-0.334px"><span class="w" style="width:27px"><span class="s" style="transform:scaleX(0.9198)">Love,</span></span> <span class="w" style="width:31px"><span class="s" style="transform:scaleX(0.9111)">Angel,</span></span></span></span></div>
<div class="cell" style="left:185px;top:259px;width:75px;height:17px;"><span><span style="word-spacing:-0.334px"><span class="w" style="width:26px"><span class="s" style="transform:scaleX(0.9283)">What</span></span> <span class="w" style="width:19px"><span class="s" style="transform:scaleX(0.8899)">You</span></span> <span class="w" style="width:17px"><span class="s" style="transform:scaleX(0.9444)">Wa</span></span></span></span></div>
<div class="cell" style="left:260px;top:259px;width:75px;height:17px;"><span><span style="word-spacing:-0.334px"><span class="w" style="width:24px"><span class="s" style="transform:scaleX(0.8990)">2004</span></span></span></span></div>
<div class="cell" style="left:335px;top:259px;width:75px;height:17px;"><span><span style="word-spacing:-0.334px"><span class="w" style="width:19px"><span class="s" style="transform:scaleX(0.8899)">Pop</span></span></span></span></div>
<div class="cell" style="left:410px;top:259px;width:75px;height:17px;"><span><span style="word-spacing:-0.334px"><span class="w" style="width:6px"><span class="s" style="transform:scaleX(0.8990)">1</span></span></span></span></div>
<div class="rh" style="left:0;top:276px;width:35px;height:17px;"></div>
<div class="cell" style="left:35px;top:276px;width:75px;height:17px;"><span><span style="word-spacing:-0.334px"><span class="w" style="width:28px"><span class="s" style="transform:scaleX(0.9128)">White</span></span> <span class="w" style="width:27px"><span class="s" style="transform:scaleX(0.9201)">Town</span></span> <span class="w" style="width:6px"><span class="s" style="transform:scaleX(0.7507)">--</span></span></span></span></div>
<div class="cell" style="left:110px;top:276px;width:75px;height:17px;"><span><span style="word-spacing:-0.334px"><span class="w" style="width:37px"><span class="s" style="transform:scaleX(0.8949)">Women</span></span> <span class="w" style="width:8px"><span class="s" style="transform:scaleX(0.8565)">in</span></span> <span class="w" style="width:13px"><span class="s" style="transform:scaleX(0.9283)">Te</span></span></span></span></div>
<div class="cell" style="left:185px;top:276px;width:75px;height:17px;"><span><span style="word-spacing:-0.334px"><span class="w" style="width:22px"><span class="s" style="transform:scaleX(0.8679)">Your</span></span> <span class="w" style="width:37px"><span class="s" style="transform:scaleX(0.8949)">Woman</span></span></span></span></div>
<div class="cell" style="left:260px;top:276px;width:75px;height:17px;"><span><span style="word-spacing:-0.334px"><span class="w" style="width:24px"><span class="s" style="transform:scaleX(0.8990)">1997</span></span></span></span></div>
<div class="cell" style="left:335px;top:276px;width:75px;height:17px;"><span><span style="word-spacing:-0.334px"><span class="w" style="width:47px"><span class="s" style="transform:scaleX(0.8921)">Electronic</span></span></span></span></div>
<div class="cell" style="left:410px;top:276px;width:75px;height:17px;"><span><span style="word-spacing:-0.334px"><span class="w" style="width:6px"><span class="s" style="transform:scaleX(0.8990)">4</span></span></span></span></div>
<div class="rh flat" style="left:0;top:293px;width:35px;height:17px;"><svg width="9" height="9" viewBox="0 0 9 9" shape-rendering="crispEdges" style="position:absolute;left:4px;top:3px"><rect x="0" y="4" width="9" height="1"/><rect x="4" y="0" width="1" height="9"/><rect x="3" y="3" width="3" height="3"/><rect x="1" y="1" width="1" height="1"/><rect x="2" y="2" width="1" height="1"/><rect x="6" y="2" width="1" height="1"/><rect x="7" y="1" width="1" height="1"/><rect x="2" y="6" width="1" height="1"/><rect x="1" y="7" width="1" height="1"/><rect x="6" y="6" width="1" height="1"/><rect x="7" y="7" width="1" height="1"/></svg></div>
<div class="cell" style="left:35px;top:293px;width:75px;height:17px;"><span></span></div>
<div class="cell" style="left:110px;top:293px;width:75px;height:17px;"><span></span></div>
<div class="cell" style="left:185px;top:293px;width:75px;height:17px;"><span></span></div>
<div class="cell" style="left:260px;top:293px;width:75px;height:17px;"><span></span></div>
<div class="cell" style="left:335px;top:293px;width:75px;height:17px;"><span></span></div>
<div class="cell" style="left:410px;top:293px;width:75px;height:17px;"><span></span></div>
<div class="sbt" style="left:0;top:423px;width:476px;height:13px;"></div>
<div class="sbb" style="left:0;top:423px;width:13px;height:13px;"><svg width="3" height="5" viewBox="0 0 3 5" shape-rendering="crispEdges" style="position:absolute;left:3px;top:3px"><rect x="2" y="0" width="1" height="5"/><rect x="1" y="1" width="1" height="3"/><rect x="0" y="2" width="1" height="1"/></svg></div>
<div class="sbb" style="left:463px;top:423px;width:13px;height:13px;"><svg width="3" height="5" viewBox="0 0 3 5" shape-rendering="crispEdges" style="position:absolute;left:4px;top:3px"><rect x="0" y="0" width="1" height="5"/><rect x="1" y="1" width="1" height="3"/><rect x="2" y="2" width="1" height="1"/></svg></div>
<div class="sbb" style="left:13px;top:423px;width:294px;height:13px;"></div>
</div></div>
<div class="btn" style="left:348px;top:554px;width:144px;height:23px;"><div class="bi" style="top:4px"><span style="word-spacing:-0.334px"><span class="w" style="width:20px"><span class="s" style="transform:scaleX(0.9367)">Add</span></span> <span class="w" style="width:42px"><span class="s" style="transform:scaleX(0.8994)">Selected</span></span> <span class="w" style="width:9px"><span class="s" style="transform:scaleX(0.8993)">to</span></span> <span class="w" style="width:32px"><span class="s" style="transform:scaleX(0.8419)">Playlist</span></span></span></div></div>
<div class="btn" style="left:660px;top:554px;width:168px;height:23px;"><div class="bi" style="top:4px"><span style="word-spacing:-0.334px"><span class="w" style="width:31px"><span class="s" style="transform:scaleX(0.8937)">Delete</span></span> <span class="w" style="width:42px"><span class="s" style="transform:scaleX(0.8994)">Selected</span></span> <span class="w" style="width:20px"><span class="s" style="transform:scaleX(0.8333)">from</span></span> <span class="w" style="width:31px"><span class="s" style="transform:scaleX(0.8452)">Library</span></span></span></div></div>
</body></html>
